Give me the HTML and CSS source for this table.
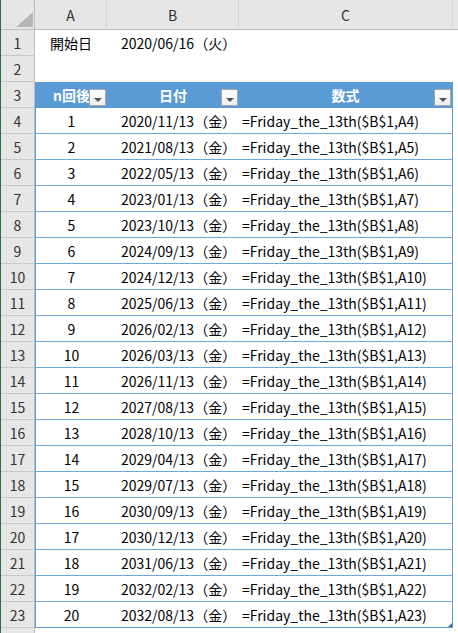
FILE: index.html
```
<!DOCTYPE html>
<html lang="ja">
<head>
    <meta charset="UTF-8">
    <title>13日の金曜日</title>
    <link rel="stylesheet" href="styles.css">
</head>
<body>
    <div class="sheet">
        <!-- column headers -->
        <div class="corner">
            <svg width="17" height="15" viewBox="0 0 17 15"><polygon points="17,0 17,15 0,15" fill="#b6b6b6"/></svg>
        </div>
        <div class="colhead">A</div>
        <div class="colhead">B</div>
        <div class="colhead">C</div>
        <div class="colhead rest"></div>

        <!-- row 1 -->
        <div class="rowhead">1</div>
        <div class="cell center">開始日</div>
        <div class="cell date">2020/06/16（火）</div>
        <div class="cell"></div>
        <div class="cell"></div>

        <!-- row 2 -->
        <div class="rowhead">2</div>
        <div class="cell"></div>
        <div class="cell"></div>
        <div class="cell"></div>
        <div class="cell"></div>

        <!-- row 3: table header -->
        <div class="rowhead">3</div>
        <div class="th first">n回後<span class="filter"></span></div>
        <div class="th">日付<span class="filter"></span></div>
        <div class="th last">数式<span class="filter"></span></div>
        <div class="cell"></div>
    </div>
    <div class="sheet" id="rows"></div>

    <script>
        const dates = [
            '2020/11/13', '2021/08/13', '2022/05/13', '2023/01/13', '2023/10/13',
            '2024/09/13', '2024/12/13', '2025/06/13', '2026/02/13', '2026/03/13',
            '2026/11/13', '2027/08/13', '2028/10/13', '2029/04/13', '2029/07/13',
            '2030/09/13', '2030/12/13', '2031/06/13', '2032/02/13', '2032/08/13'
        ];
        const rows = document.getElementById('rows');

        rows.innerHTML = dates.map((date, i) => {
            const r = i + 4;
            const lastClass = i === dates.length - 1 ? ' bottom' : '';
            return `
                <div class="rowhead">${r}</div>
                <div class="td first center${lastClass}">${i + 1}</div>
                <div class="td date${lastClass}">${date}（金）</div>
                <div class="td last formula${lastClass}">=Friday_the_13th($B$1,A${r})</div>
                <div class="cell"></div>`;
        }).join('') + `
            <div class="rowhead"></div>
            <div class="cell"></div>
            <div class="cell"></div>
            <div class="cell"></div>
            <div class="cell"></div>`;
    </script>
</body>
</html>
```

FILE: styles.css
```
html, body {
    margin: 0;
    height: 100%;
    overflow: hidden;
}
body {
    background: #fff;
    border-left: 1px solid #217346;
    font-family: "Noto Sans CJK JP", sans-serif;
    font-size: 14px;
    color: #000;
}
.sheet {
    display: grid;
    grid-template-columns: 34px 72px 132px 214px 1fr;
    grid-auto-rows: 26px;
}
.sheet:first-child {
    grid-template-rows: 30px;
}

.corner, .colhead, .rowhead {
    background: #e6e6e6;
    color: #333;
    display: flex;
    align-items: center;
    justify-content: center;
    box-sizing: border-box;
}
.corner {
    border-right: 1px solid #bdbdbd;
    border-bottom: 1px solid #bdbdbd;
    align-items: flex-end;
    justify-content: flex-end;
    padding: 0 1px 2px 0;
}
.corner svg {
    display: block;
}
.colhead {
    border-right: 1px solid #d4d4d4;
    border-bottom: 1px solid #bdbdbd;
}
.colhead.rest {
    border-right: none;
}
.rowhead {
    border-right: 1px solid #bdbdbd;
    border-bottom: 1px solid #c8c8c8;
}

.cell, .td, .th {
    display: flex;
    align-items: center;
    box-sizing: border-box;
    white-space: nowrap;
    overflow: hidden;
}
.center {
    justify-content: center;
}
.date {
    padding-left: 14px;
}

/* table */
.th {
    position: relative;
    background: #5b9bd5;
    color: #fff;
    font-weight: bold;
    justify-content: center;
    border-bottom: 1px solid #5b9bd5;
}
.td {
    border-bottom: 1px solid #6fa6dc;
}
.td.bottom {
    border-bottom-color: #5b9bd5;
}
.first {
    border-left: 1px solid #5b9bd5;
}
.last {
    border-right: 1px solid #5b9bd5;
}
.td.formula {
    padding-left: 3px;
}
.td.last.bottom {
    position: relative;
}
.td.last.bottom::after {
    content: "";
    position: absolute;
    right: 0;
    bottom: 0;
    width: 0;
    height: 0;
    border-left: 4px solid transparent;
    border-bottom: 4px solid #2f6fb6;
}

.filter {
    position: absolute;
    right: 1px;
    bottom: 1px;
    width: 17px;
    height: 17px;
    box-sizing: border-box;
    border: 1px solid #a6a6a6;
    background: linear-gradient(#ffffff, #eeeeee);
}
.filter::after {
    content: "";
    position: absolute;
    left: 4px;
    top: 8px;
    border-left: 4px solid transparent;
    border-right: 4px solid transparent;
    border-top: 4px solid #555;
}
```
